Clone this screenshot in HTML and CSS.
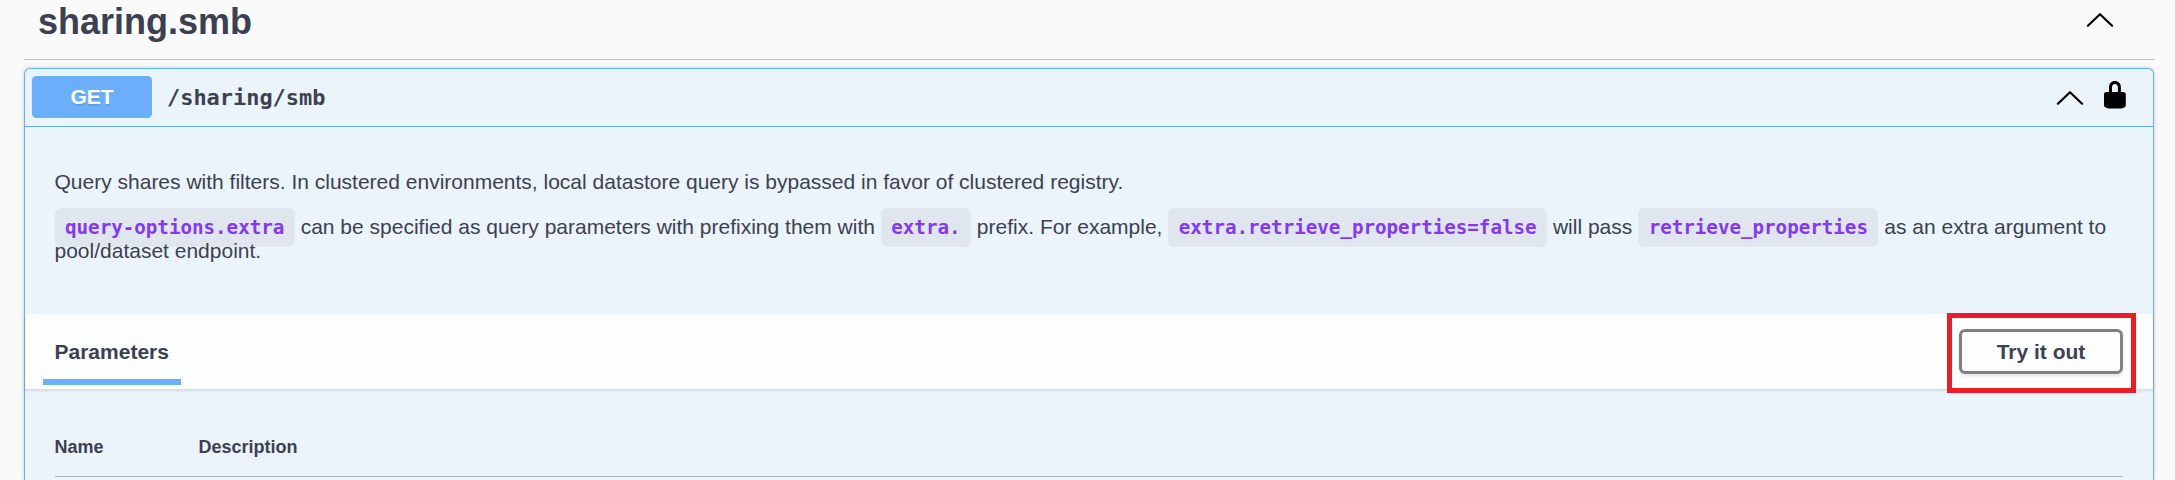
FILE: index.html
```html
<!DOCTYPE html>
<html lang="en">
<head>
<meta charset="utf-8">
<title>sharing.smb</title>
<link rel="stylesheet" href="styles.css">
</head>
<body>
<section class="tag-section">
  <header class="tag-header">
    <h3 class="tag-title">sharing.smb</h3>
    <svg class="chevron" viewBox="0 0 30 18"><path d="M2.900 14.700 15 3.200l12.100 11.500"/></svg>
  </header>
  <div class="opblock">
    <div class="summary">
      <span class="method">GET</span>
      <span class="path">/sharing/smb</span>
      <svg class="chevron" viewBox="0 0 30 18"><path d="M2.900 14.700 15 3.200l12.100 11.500"/></svg>
      <svg class="lock" viewBox="0 0 22 28"><path fill-rule="evenodd" d="M5 11V6.2C5 2.500 7.400 0 10.900 0s6 2.500 6 6.200V11h1.800c1.700 0 3.100.8 3.100 2.200v10.900c0 1.400-.9 2.300-2.100 2.700l-2.300.6H4.400l-2.300-.6C.9 26.400 0 25.500 0 24.100V13.200C0 11.800 1 11 2.700 11zm3 0h5.900V6.200c0-2-1.100-3.300-3-3.300S8 4.200 8 6.200z"/></svg>
    </div>
    <div class="description">
      <p>Query shares with filters. In clustered environments, local datastore query is bypassed in favor of clustered registry.</p>
      <p><code>query-options.extra</code> can be specified as query parameters with prefixing them with <code>extra.</code> prefix. For example, <code>extra.retrieve_properties=false</code> will pass <code>retrieve_properties</code> as an extra argument to pool/dataset endpoint.</p>
    </div>
    <div class="section-header">
      <h4 class="tab">Parameters</h4>
      <div class="highlight"><button class="try-out">Try it out</button></div>
    </div>
    <div class="parameters">
      <div class="table-head"><span>Name</span><span>Description</span></div>
    </div>
  </div>
</section>
</body>
</html>
```
FILE: styles.css
```css
* { box-sizing: border-box; }
body {
  margin: 0;
  height: 480px;
  overflow: hidden;
  background: #fafafa;
  color: #3b4151;
  font-family: "Liberation Sans", Arial, sans-serif;
}
h3, h4, p { margin: 0; }
.tag-section { padding: 0 20px 0 24px; width: 2174px; }
.tag-header {
  display: flex;
  align-items: flex-start;
  justify-content: space-between;
  height: 60px;
  padding: 0 39px 0 14px;
  border-bottom: 1px solid #bdbfc2;
}
.tag-title { font-size: 36px; line-height: 44px; }
.chevron { width: 30px; height: 18px; fill: none; stroke: #000; stroke-width: 2.2; stroke-linecap: round; stroke-linejoin: round; }
.tag-header .chevron { margin-top: 11px; }
.opblock {
  height: 412px;
  margin-top: 8px;
  border: 1px solid #61affe;
  border-bottom: 0;
  border-radius: 6px 6px 0 0;
  background: #ebf3fb;
  box-shadow: 0 0 4.5px rgba(0, 0, 0, .19);
}
.summary {
  display: flex;
  align-items: center;
  height: 58px;
  padding: 0 27px 0 7px;
  border-bottom: 1px solid #61affe;
}
.method {
  width: 120px;
  height: 42px;
  margin-top: -1px;
  border-radius: 4.5px;
  background: #6baffa;
  color: #fff;
  font-size: 21px;
  font-weight: 700;
  line-height: 41px;
  text-align: center;
  text-shadow: 0 1.5px 0 rgba(0, 0, 0, .1);
}
.path {
  flex: 1;
  padding-left: 15px;
  font: 700 21.93px/28px "DejaVu Sans Mono", monospace;
}
.lock { width: 22px; height: 28px; margin: -6px 0 0 19px; fill: #000; }
.description { height: 187px; padding: 43px 30px 0 29.5px; font-size: 21px; line-height: 24px; }
.description p + p { margin-top: 21px; }
.description code {
  padding: 8px 10.5px;
  border-radius: 6px;
  background: rgba(0, 0, 0, .05);
  color: #8338f7;
  font: 700 19.18px/20px "DejaVu Sans Mono", monospace;
}
.section-header {
  display: flex;
  align-items: flex-start;
  justify-content: space-between;
  height: 75px;
  padding: 0 17px 0 18px;
  background: #fcfdff;
  box-shadow: 0 1.5px 3px rgba(0, 0, 0, .12);
}
.tab {
  width: 138px;
  height: 71px;
  padding-left: 11.5px;
  border-bottom: 6px solid #6baffa;
  font-size: 21px;
  line-height: 76px;
}
.highlight { height: 80px; margin-top: -1px; padding: 11px 8px 0 7px; width: 189px; border: 5px solid #ed1c24; }
.try-out {
  display: block;
  width: 164px;
  height: 45px;
  padding: 0;
  border: 3px solid #808080;
  border-radius: 6px;
  background: transparent;
  box-shadow: 0 1.5px 3px rgba(0, 0, 0, .1);
  color: #3b4151;
  font: 700 21px/38px "Liberation Sans", Arial, sans-serif;
}
.parameters { padding: 46px 30px 0 29.5px; }
.table-head {
  display: grid;
  grid-template-columns: 144px 1fr;
  height: 42px;
  border-bottom: 1px solid #a9b1bd;
  font-size: 18px;
  font-weight: 700;
  line-height: 24px;
}
```
